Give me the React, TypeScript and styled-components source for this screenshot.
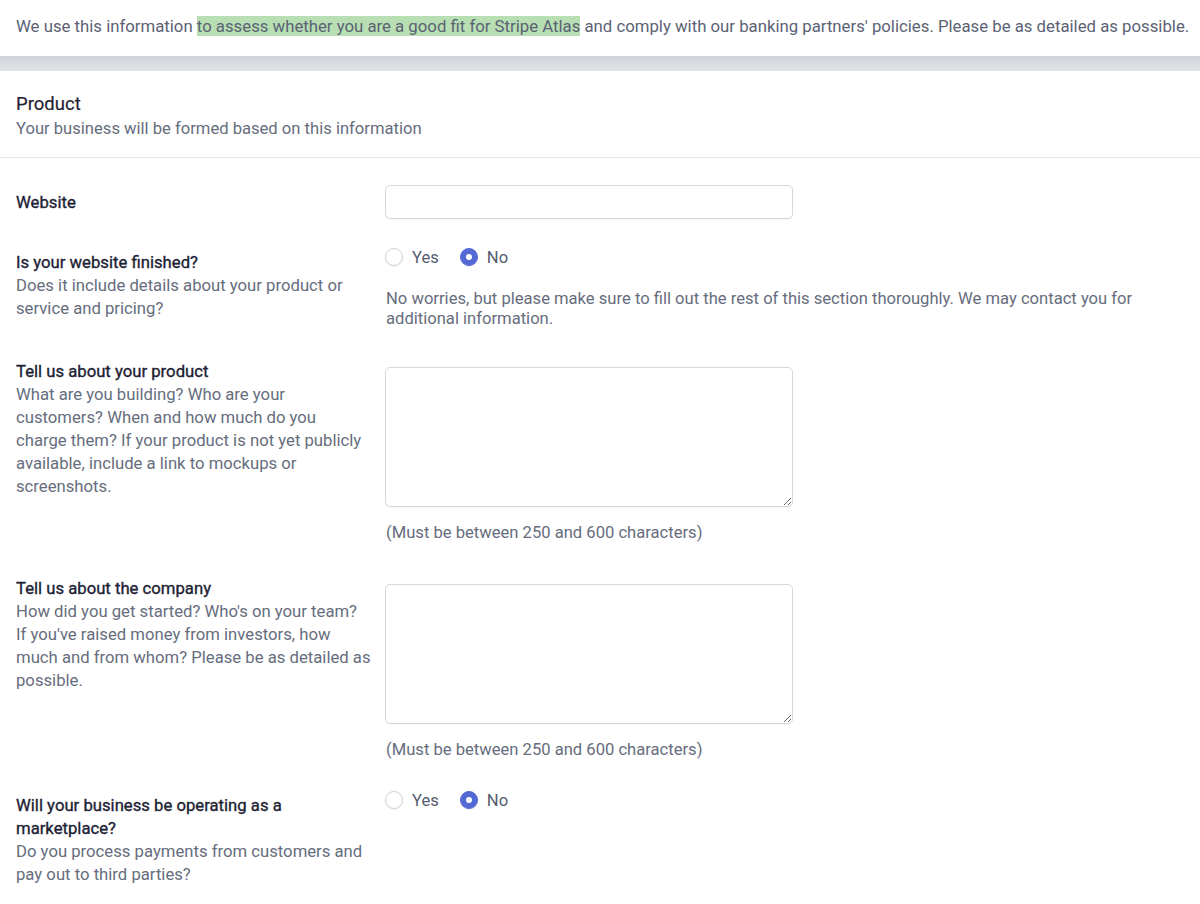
import React from 'react';
import styled, { createGlobalStyle } from 'styled-components';

const GlobalStyle = createGlobalStyle`
	html, body { margin: 0; padding: 0; background: #fff; }
	body {
		font-family: Roboto, "Noto Sans", "Liberation Sans", sans-serif;
		-webkit-font-smoothing: antialiased;
	}
	* { box-sizing: border-box; }
`;

const Page = styled.div`
	width: 1200px;
	overflow: hidden;
`;

const Intro = styled.p`
	margin: 0;
	padding: 14px 16px 18px;
	font-size: 16.75px;
	line-height: 24px;
	color: #5b6274;
	white-space: nowrap;
`;

const Highlight = styled.mark`
	background: #b7dfb3;
	color: inherit;
`;

const Band = styled.div`
	height: 15px;
	background: linear-gradient(#cfd2d7, #e2e5e9);
`;

const SectionHeader = styled.header`
	padding: 21px 16px 16px;
	border-bottom: 1px solid #e4e6ea;
`;

const SectionTitle = styled.h2`
	margin: 0;
	font-size: 18.5px;
	line-height: 24px;
	font-weight: 400;
	color: #1f2333;
	-webkit-text-stroke: 0.2px #1f2333;
`;

const SectionSub = styled.p`
	margin: 1px 0 0;
	font-size: 16.6px;
	line-height: 24px;
	color: #666d7d;
`;

const Fields = styled.div`
	display: flex;
	flex-direction: column;
	padding: 27px 16px 40px;
`;

type Kind = 'input' | 'radio' | 'textarea';

const labelOffset: Record<Kind, number> = { input: 6, radio: 5, textarea: 0 };
const controlOffset: Record<Kind, number> = { input: 0, radio: 0, textarea: 7 };

const Row = styled.div<{ $space: number }>`
	display: grid;
	grid-template-columns: 354.75px 408px;
	column-gap: 14.25px;
	align-items: start;
	margin-top: ${({ $space }) => $space}px;
`;

const LabelCol = styled.div<{ $kind: Kind }>`
	padding-top: ${({ $kind }) => labelOffset[$kind]}px;
	font-size: 16.7px;
	line-height: 23px;
`;

const Label = styled.div`
	font-weight: 400;
	color: #1d2234;
	-webkit-text-stroke: 0.35px #1d2234;
`;

const Desc = styled.div`
	color: #666d7d;
`;

const ControlCol = styled.div<{ $kind: Kind }>`
	padding-top: ${({ $kind }) => controlOffset[$kind]}px;
`;

const TextInput = styled.input`
	display: block;
	width: 408px;
	height: 34px;
	border: 1px solid #d5d8de;
	border-radius: 5px;
	box-shadow: 0 1px 1px rgba(0, 0, 0, 0.04);
	background: #fff;
	outline: none;
`;

const TextArea = styled.textarea`
	display: block;
	width: 408px;
	height: 140px;
	border: 1px solid #d5d8de;
	border-radius: 5px;
	box-shadow: 0 1px 1px rgba(0, 0, 0, 0.04);
	background: #fff;
	outline: none;
	resize: vertical;
`;

const Hint = styled.p`
	margin: 16px 0 0 1px;
	font-size: 16.6px;
	line-height: 20px;
	color: #666d7d;
`;

const Note = styled.p`
	margin: 21px 0 0 1px;
	width: 800px;
	font-size: 16.6px;
	line-height: 20px;
	color: #666d7d;
`;

const RadioGroup = styled.div`
	display: flex;
	align-items: center;
	gap: 21px;
	height: 22px;
`;

const RadioOption = styled.label`
	display: flex;
	align-items: center;
	gap: 9px;
	font-size: 16.6px;
	color: #555c6e;
`;

const Dot = styled.span<{ $checked?: boolean }>`
	width: 18px;
	height: 18px;
	border-radius: 50%;
	display: flex;
	align-items: center;
	justify-content: center;
	background: ${({ $checked }) => ($checked ? '#5469d4' : '#fff')};
	border: 1px solid ${({ $checked }) => ($checked ? '#5469d4' : '#cfd2d8')};
	box-shadow: 0 1px 1px rgba(0, 0, 0, 0.06);

	&::after {
		content: '';
		display: ${({ $checked }) => ($checked ? 'block' : 'none')};
		width: 6px;
		height: 6px;
		border-radius: 50%;
		background: #fff;
	}
`;

const YesNo = () => (
	<RadioGroup>
		<RadioOption><Dot />Yes</RadioOption>
		<RadioOption><Dot $checked />No</RadioOption>
	</RadioGroup>
);

const fields = [
	{ kind: 'input' as Kind, space: 0, label: 'Website' },
	{
		kind: 'radio' as Kind,
		space: 27,
		label: 'Is your website finished?',
		desc: 'Does it include details about your product or service and pricing?',
		note: 'No worries, but please make sure to fill out the rest of this section thoroughly. We may contact you for additional information.',
	},
	{
		kind: 'textarea' as Kind,
		space: 31,
		label: 'Tell us about your product',
		desc: 'What are you building? Who are your customers? When and how much do you charge them? If your product is not yet publicly available, include a link to mockups or screenshots.',
		hint: '(Must be between 250 and 600 characters)',
	},
	{
		kind: 'textarea' as Kind,
		space: 34,
		label: 'Tell us about the company',
		desc: "How did you get started? Who's on your team? If you've raised money from investors, how much and from whom? Please be as detailed as possible.",
		hint: '(Must be between 250 and 600 characters)',
	},
	{
		kind: 'radio' as Kind,
		space: 29,
		label: 'Will your business be operating as a marketplace?',
		desc: 'Do you process payments from customers and pay out to third parties?',
	},
];

const App = () => (
	<Page>
		<GlobalStyle />
		<Intro>
			We use this information <Highlight>to assess whether you are a good fit for Stripe Atlas</Highlight> and comply with our banking partners' policies. Please be as detailed as possible.
		</Intro>
		<Band />
		<SectionHeader>
			<SectionTitle>Product</SectionTitle>
			<SectionSub>Your business will be formed based on this information</SectionSub>
		</SectionHeader>

		<Fields>
			{ fields.map(({
				kind, space, label, desc, note, hint,
			}) => (
				<Row key={label} $space={space}>
					<LabelCol $kind={kind}>
						<Label>{ label }</Label>
						{ desc && <Desc>{ desc }</Desc> }
					</LabelCol>
					<ControlCol $kind={kind}>
						{ kind === 'input' && <TextInput type="text" /> }
						{ kind === 'radio' && <YesNo /> }
						{ kind === 'textarea' && <TextArea /> }
						{ note && <Note>{ note }</Note> }
						{ hint && <Hint>{ hint }</Hint> }
					</ControlCol>
				</Row>
			)) }
		</Fields>
	</Page>
);

export default App;
